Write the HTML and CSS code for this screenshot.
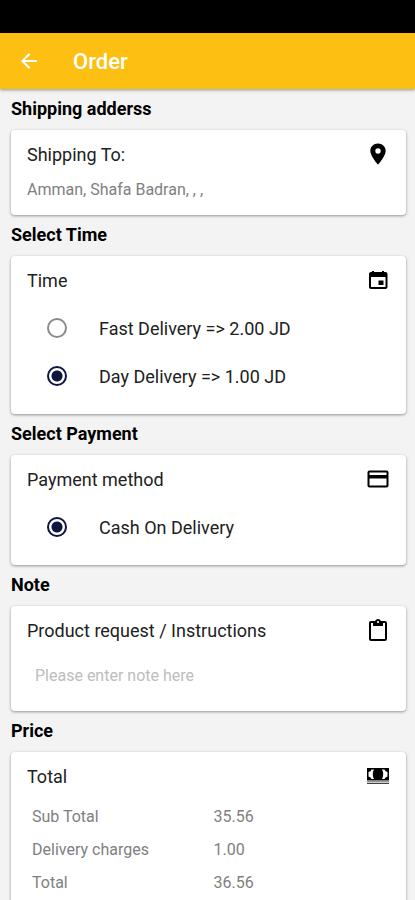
FILE: index.html
```html
<!DOCTYPE html>
<html lang="en">
<head>
<meta charset="utf-8">
<meta name="viewport" content="width=device-width, initial-scale=1">
<title>Order</title>
<link rel="stylesheet" href="styles.css">
</head>
<body>
<div class="status-bar"></div>
<header class="app-bar">
  <button class="back" type="button" aria-label="Back">
    <svg class="icon" viewBox="0 0 24 24"><path d="M20 11H7.83l5.59-5.59L12 4l-8 8 8 8 1.41-1.41L7.83 13H20z"/></svg>
  </button>
  <h1 class="app-title">Order</h1>
</header>
<main class="content">
  <h2 class="section-title">Shipping adderss</h2>
  <section class="card">
    <div class="card-head">
      <h3 class="card-title">Shipping To:</h3>
      <svg class="icon" viewBox="0 0 24 24"><path d="M12 1.500C7.600 1.500 4.300 4.800 4.300 9c0 5.300 7.700 13.500 7.700 13.500S19.700 14.300 19.700 9c0-4.200-3.300-7.500-7.700-7.500zm0 10.200a2.700 2.700 0 0 1 0-5.400 2.700 2.700 0 0 1 0 5.400z"/></svg>
    </div>
    <p class="address">Amman, Shafa Badran, , ,</p>
  </section>

  <h2 class="section-title">Select Time</h2>
  <section class="card">
    <div class="card-head">
      <h3 class="card-title">Time</h3>
      <svg class="icon" viewBox="0 0 24 24"><path d="M17.500 12.500h-5v4.500h5v-4.500zM16 3v1H8V3H6v1H5c-1.110 0-2 .9-2 2v13c0 1.100.890 2 2 2h14.500c1.100 0 2-.9 2-2V6c0-1.100-.9-2-2-2H18V3h-2zm3.500 16H5V9h14.500v10z"/></svg>
    </div>
    <div class="options">
      <label class="option"><input class="radio" type="radio" name="time">Fast Delivery =&gt; 2.00 JD</label>
      <label class="option"><input class="radio" type="radio" name="time" checked>Day Delivery =&gt; 1.00 JD</label>
    </div>
  </section>

  <h2 class="section-title">Select Payment</h2>
  <section class="card">
    <div class="card-head">
      <h3 class="card-title">Payment method</h3>
      <svg class="icon" viewBox="0 0 24 24"><path d="M20.500 3.500h-17c-1.110 0-2 .890-2 2v13c0 1.110.890 2 2 2h17c1.110 0 2-.890 2-2v-13c0-1.110-.890-2-2-2zm0 15h-17v-7h17v7zm0-10.500h-17V5.500h17V8z"/></svg>
    </div>
    <div class="options">
      <label class="option"><input class="radio" type="radio" name="payment" checked>Cash On Delivery</label>
    </div>
  </section>

  <h2 class="section-title">Note</h2>
  <section class="card">
    <div class="card-head">
      <h3 class="card-title"><label for="note">Product request / Instructions</label></h3>
      <svg class="icon" viewBox="0 0 24 24"><path d="M19 3h-4.180C14.400 1.840 13.300 1 12 1s-2.400.840-2.820 2H5c-1.100 0-2 .9-2 2v16c0 1.100.9 2 2 2h14c1.100 0 2-.9 2-2V5c0-1.100-.9-2-2-2zm-7 0c.550 0 1 .450 1 1s-.450 1-1 1-1-.450-1-1 .450-1 1-1zm7 18H5V5h2v3h10V5h2v16z"/></svg>
    </div>
    <input class="note" id="note" type="text" placeholder="Please enter note here">
  </section>

  <h2 class="section-title">Price</h2>
  <section class="card">
    <div class="card-head">
      <h3 class="card-title">Total</h3>
      <svg class="icon" viewBox="0 0 24 24"><path fill-rule="evenodd" d="M1 4h22v12.500H1zM8 5.500H5.500Q5 7.500 2.500 8v4.500Q5 13 5.500 15H8Q6.800 13 6.800 10.250T8 5.500zM16 5.500h2.500Q19 7.500 21.500 8v4.500Q19 13 18.500 15H16q1.200-2 1.200-4.750T16 5.500z"/><path fill="#999" d="M1 17h22v1.500H1z"/><path fill="#444" d="M1 19h22v1H1z"/></svg>
    </div>
    <table class="prices">
      <tr><th scope="row">Sub Total</th><td>35.56</td></tr>
      <tr><th scope="row">Delivery charges</th><td>1.00</td></tr>
      <tr><th scope="row">Total</th><td>36.56</td></tr>
    </table>
  </section>
</main>
</body>
</html>
```
FILE: styles.css
```css
* {
  box-sizing: border-box;
}

html {
  overflow-x: hidden;
  scrollbar-width: none;
}

body {
  margin: 0;
  background: #f3f3f3;
  color: #212121;
  font-family: Roboto, "Liberation Sans", sans-serif;
  font-size: 18px;
}

h1, h2, h3, p {
  margin: 0;
}

.status-bar {
  height: 33px;
  background: #000;
}

.app-bar {
  display: flex;
  align-items: center;
  gap: 32px;
  height: 56px;
  padding: 0 17px;
  background: #fdbf12;
  color: #fff;
  box-shadow: 0 1px 3px rgba(0, 0, 0, 0.4);
}

.back {
  display: flex;
  padding: 0;
  border: 0;
  background: none;
  color: inherit;
}

.app-title {
  font-size: 22px;
  font-weight: 500;
}

.icon {
  width: 24px;
  height: 24px;
  fill: currentColor;
}

.content {
  padding: 0 9px 16px 11px;
}

.section-title {
  padding-bottom: 2px;
  color: #000;
  font-size: 18px;
  font-weight: 700;
  line-height: 39px;
}

.card {
  padding: 0 16px 14px;
  border-radius: 4px;
  background: #fff;
  box-shadow: 0 1px 3px rgba(0, 0, 0, 0.4);
}

.card-head {
  display: flex;
  align-items: center;
  justify-content: space-between;
  height: 48px;
  color: #000;
}

.card-title {
  color: #212121;
  font-size: 18px;
  font-weight: 400;
}

.address {
  color: #808080;
  font-size: 16px;
  line-height: 23px;
}

.option {
  display: flex;
  align-items: center;
  gap: 32px;
  height: 48px;
  padding-left: 20px;
}

.radio {
  flex: none;
  width: 20px;
  height: 20px;
  margin: 0;
  border: 2px solid #8a8a8a;
  border-radius: 50%;
  appearance: none;
}

.radio:checked {
  border-color: #0d1440;
  background: radial-gradient(circle, #0d1440 5px, #fff 6px);
}

.note {
  display: block;
  width: 100%;
  height: 43px;
  padding: 0 8px;
  border: 0;
  background: none;
  color: #212121;
  font: inherit;
  font-size: 16px;
}

.note::placeholder {
  color: #bdbdbd;
}

.prices {
  width: 100%;
  border-collapse: collapse;
  table-layout: fixed;
  color: #808080;
  font-size: 16px;
}

.prices th,
.prices td {
  height: 33px;
  padding: 0 0 0 5px;
  font-weight: 400;
  text-align: left;
}
```
